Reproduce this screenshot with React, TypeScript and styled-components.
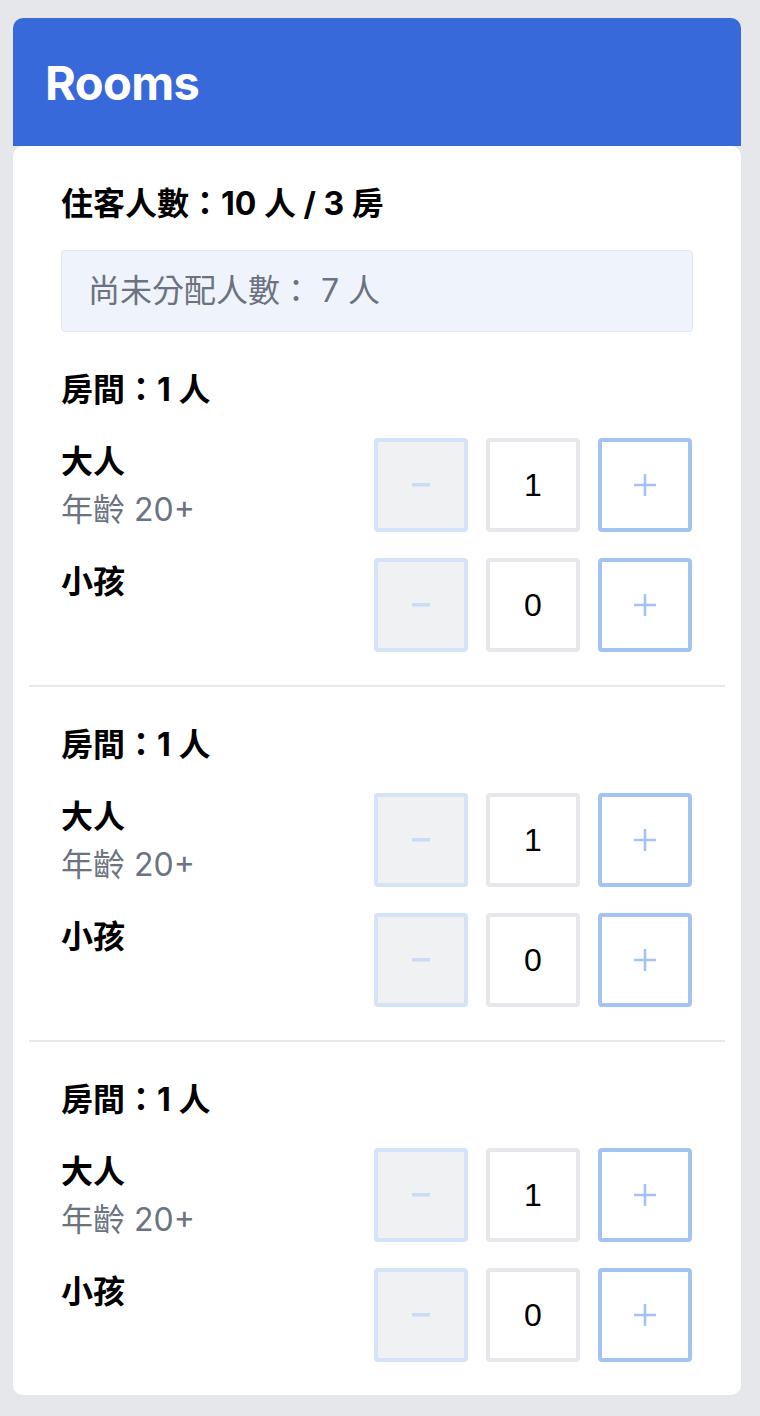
import React from 'react';
import styled, { createGlobalStyle } from 'styled-components';

interface Room {
    adults: number;
    children: number;
}

const rooms: Room[] = [
    { adults: 1, children: 0 },
    { adults: 1, children: 0 },
    { adults: 1, children: 0 },
];

const GlobalStyle = createGlobalStyle`
    html, body {
        margin: 0;
        padding: 0;
        background: #e5e7eb;
    }
    body {
        font-family: Inter, "Noto Sans CJK TC", sans-serif;
        color: #000;
    }
`;

function MinusIcon() {
    return (<svg width="18" height="4" viewBox="0 0 18 4">
        <rect x="0" y="0" width="18" height="3.5" fill="#c9dcf5" />
    </svg>);
}

function PlusIcon() {
    return (<svg width="22" height="22" viewBox="0 0 22 22">
        <path d="M11 0 V22 M0 11 H22" stroke="#a3c4f3" strokeWidth="2.6" />
    </svg>);
}

function Counter({ value }: { value: number }) {
    return (<Controls>
        <StepButton kind="minus" disabled><MinusIcon /></StepButton>
        <ValueBox>{ value }</ValueBox>
        <StepButton kind="plus"><PlusIcon /></StepButton>
    </Controls>);
}

function RoomSection({ room }: { room: Room }) {
    return (<Section>
        <SectionTitle>房間：{ room.adults + room.children } 人</SectionTitle>
        <Rows>
            <Row>
                <LabelCol>
                    <Label>大人</Label>
                    <SubLabel>年齡 20+</SubLabel>
                </LabelCol>
                <Counter value={room.adults} />
            </Row>
            <Row>
                <LabelCol>
                    <Label>小孩</Label>
                </LabelCol>
                <Counter value={room.children} />
            </Row>
        </Rows>
    </Section>);
}

export default function App() {
    return (<>
        <GlobalStyle />
        <Page>
            <Card>
                <Header>Rooms</Header>
                <Body>
                    <Summary>
                        <SummaryTitle>住客人數：10 人 / 3 房</SummaryTitle>
                        <InfoBox>尚未分配人數： 7 人</InfoBox>
                    </Summary>
                    { rooms.map((r, i) => <React.Fragment key={i}>
                        { i > 0 && <Divider /> }
                        <RoomSection room={r} />
                    </React.Fragment>) }
                </Body>
            </Card>
        </Page>
    </>);
}

const Page = styled.div`
    padding: 18px 19px 22px 13px;
`;

const Card = styled.div`
    display: flex;
    flex-direction: column;
`;

const Header = styled.div`
    height: 128px;
    display: flex;
    align-items: center;
    padding: 0 32px;
    box-sizing: border-box;
    background: #3869db;
    border-radius: 10px 10px 0 0;
    color: #fff;
    font-family: Inter, "Noto Sans CJK TC", sans-serif;
    font-weight: 700;
    font-size: 47px;
    letter-spacing: -0.6px;
`;

const Body = styled.div`
    background: #fff;
    border-radius: 10px;
    padding: 0 16px;
`;

const Summary = styled.div`
    padding: 34px 32px 0;
    display: flex;
    flex-direction: column;
    gap: 22px;
`;

const SummaryTitle = styled.div`
    font-size: 32px;
    line-height: 48px;
    font-weight: 700;
`;

const InfoBox = styled.div`
    background: #eff4fc;
    border: 1.5px solid #e3e6ea;
    border-radius: 4px;
    padding: 16px 26px 16px;
    font-size: 32px;
    line-height: 48px;
    color: #6b7280;
`;

const Section = styled.div`
    padding: 34px 33px 33px 32px;
`;

const SectionTitle = styled.div`
    font-size: 32px;
    line-height: 48px;
    font-weight: 700;
`;

const Rows = styled.div`
    margin-top: 24px;
    display: flex;
    flex-direction: column;
    gap: 24px;
`;

const Row = styled.div`
    display: flex;
    align-items: flex-start;
    justify-content: space-between;
`;

const LabelCol = styled.div`
    display: flex;
    flex-direction: column;
`;

const Label = styled.div`
    font-size: 32px;
    line-height: 48px;
    font-weight: 700;
`;

const SubLabel = styled.div`
    font-size: 32px;
    line-height: 48px;
    color: #6b7280;
`;

const Controls = styled.div`
    display: flex;
    gap: 18px;
`;

const StepButton = styled.button<{ kind: 'minus' | 'plus' }>`
    width: 94px;
    height: 94px;
    box-sizing: border-box;
    display: flex;
    align-items: center;
    justify-content: center;
    padding: 0;
    border-radius: 4px;
    border: 4px solid ${props => props.kind === 'minus' ? '#d4e3f8' : '#a3c4f3'};
    background: ${props => props.kind === 'minus' ? '#eff1f3' : '#fff'};
`;

const ValueBox = styled.div`
    width: 94px;
    height: 94px;
    box-sizing: border-box;
    display: flex;
    align-items: center;
    justify-content: center;
    border: 4px solid #e5e7eb;
    border-radius: 4px;
    font-family: "Liberation Sans", Arial, sans-serif;
    font-size: 32px;
`;

const Divider = styled.div`
    height: 2px;
    background: #e5e7eb;
`;
